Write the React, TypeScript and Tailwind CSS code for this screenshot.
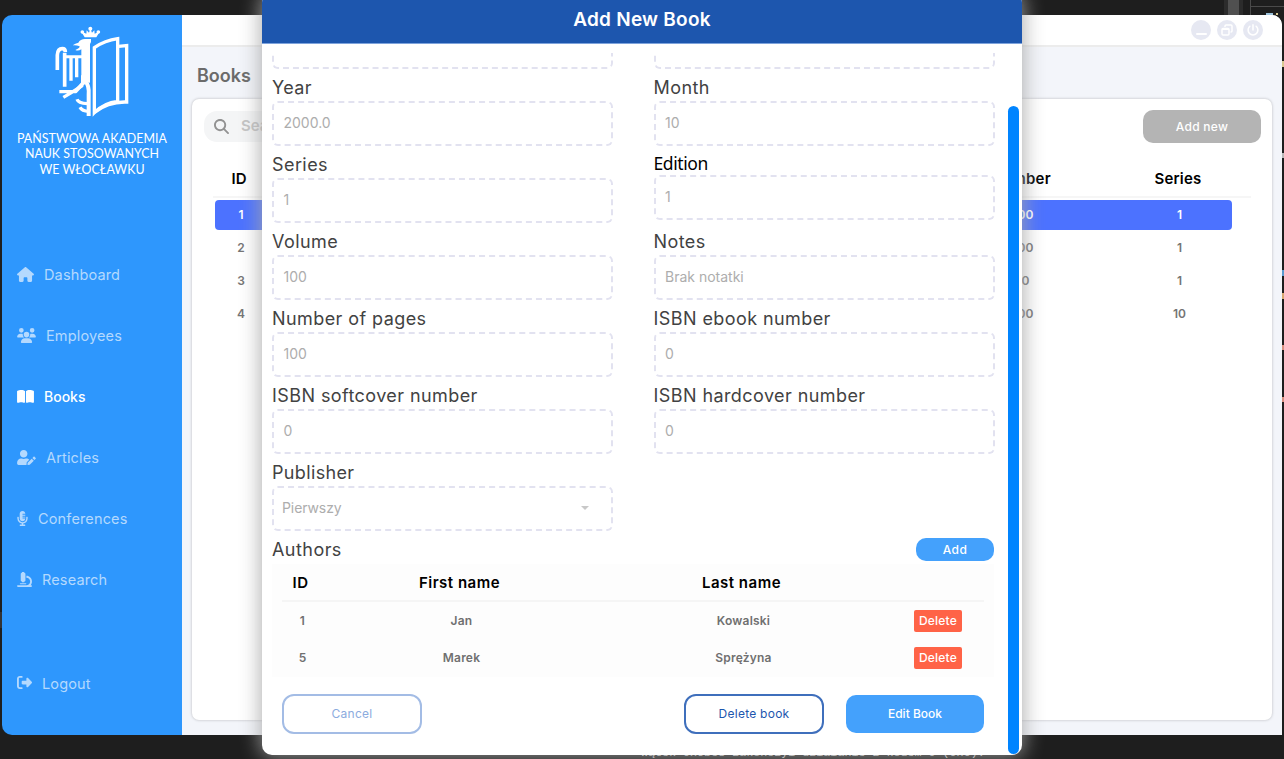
import React from "react";
import {
  FaHouse,
  FaUsers,
  FaBookOpen,
  FaMicroscope,
  FaRightFromBracket,
  FaMagnifyingGlass,
  FaPowerOff,
} from "react-icons/fa6";
import { FaUserEdit, FaMicrophoneAlt } from "react-icons/fa";

function Crest() {
  return (
    <svg viewBox="0 0 255 300" className="h-[100px] w-[85px]" fill="none" stroke="#fff">
      <path fill="#fff" stroke="none" d="M104 46 93 28l16 7 1-10 7 7 4-12 5 12 7-7 1 10 16-7-11 18Z" />
      <g fill="#fff" stroke="none">
        <circle cx="97" cy="30" r="5.5" />
        <circle cx="121" cy="20" r="6" />
        <circle cx="145" cy="30" r="5.5" />
        <path d="M68 70q8-6 17-8 6-11 20-11h18v9l-3 6v116l-26-3V82q-9 6-18 2l7-4q6-2 6-7-12-5-21-3Z" />
      </g>
      <path strokeWidth="11" d="M22 144V99q1-19 15-19 9 0 9 10" />
      <path strokeWidth="11" d="M44 92v102" />
      <path strokeWidth="9" d="M40 104h60" />
      <path strokeWidth="10" d="M63 102v74M80 102v64" />
      <path strokeWidth="12" d="M99 160v24l-24 26" />
      <path strokeWidth="10" d="M78 209H28M98 190l-34 22-24 14" />
      <path strokeWidth="12" d="M106 178q12 12 10 40v64" />
      <path strokeWidth="10" d="M81 232q4 12 31 13M90 256q6 12 26 12" />
      <path strokeWidth="10" d="M133 77q32-22 70-27v188q-40 4-70 34Z" />
      <path strokeWidth="10" d="M205 73l25-2v169q-55-2-97 31" />
    </svg>
  );
}

const nav = [
  { label: "Dashboard", Icon: FaHouse, size: "h-[15px] w-[17px]" },
  { label: "Employees", Icon: FaUsers, size: "h-[15px] w-[19px]" },
  { label: "Books", Icon: FaBookOpen, size: "h-[15px] w-[17px]" },
  { label: "Articles", Icon: FaUserEdit, size: "h-[15px] w-[19px]" },
  { label: "Conferences", Icon: FaMicrophoneAlt, size: "h-[15px] w-[11px]" },
  { label: "Research", Icon: FaMicroscope, size: "h-[15px] w-[15px]" },
];

function Sidebar() {
  return (
    <aside className="flex w-[180px] shrink-0 flex-col bg-[#2e97fd] text-[14.5px] tracking-[0.15px] text-[#b4d9fe]">
      <div className="flex flex-col items-center pt-[7px]">
        <Crest />
        <div className="mt-[9px] text-center font-[Lato] text-[12.4px] leading-[15.3px] tracking-[0.05px] whitespace-nowrap text-white">
          PAŃSTWOWA AKADEMIA
          <br />
          NAUK STOSOWANYCH
          <br />
          WE WŁOCŁAWKU
        </div>
      </div>
      <nav className="mt-[67px] flex flex-col pl-[15px]">
        {nav.map(({ label, Icon, size }) => (
          <a
            key={label}
            className={
              label === "Books"
                ? "flex h-[61px] items-center gap-[10px] text-[14px] font-medium tracking-[0px] text-white"
                : "flex h-[61px] items-center gap-[10px]"
            }
          >
            <Icon className={size} />
            {label}
          </a>
        ))}
      </nav>
      <a className="mt-[59px] flex h-[30px] items-center gap-[10px] pl-[15px]">
        <FaRightFromBracket className="mb-[3px] h-[15px] w-[15px]" />
        Logout
      </a>
    </aside>
  );
}

const rows = [
  ["1", "100", "1"],
  ["2", "100", "1"],
  ["3", "10", "1"],
  ["4", "100", "10"],
];

function BooksTable() {
  return (
    <div className="mr-[21px] ml-[21px] pt-[20px] text-center">
      <div className="grid h-[35px] grid-cols-[52px_1fr_168px_146px] items-center border-b-2 border-[#f6f6f6] text-[15px] font-semibold text-black">
        <span>ID</span>
        <span />
        <span className="tracking-[0.3px]">Number</span>
        <span className="tracking-[0.2px]">Series</span>
      </div>
      <div className="mt-[2px] flex w-[1019px] flex-col gap-[3px] pl-[2px] text-[12px] font-semibold text-[#757575]">
        {rows.map(([id, num, series]) => (
          <div
            key={id}
            className={
              id === "1"
                ? "grid h-[30px] grid-cols-[52px_1fr_168px_125px] items-center rounded-[4px] bg-[#4c72ff] text-white"
                : "grid h-[30px] grid-cols-[52px_1fr_168px_125px] items-center"
            }
          >
            <span>{id}</span>
            <span />
            <span>{num}</span>
            <span className="pl-[20px]">{series}</span>
          </div>
        ))}
      </div>
    </div>
  );
}

function Main() {
  const round = "flex h-[20px] w-[20px] items-center justify-center rounded-full bg-[#e6e8f2]";
  return (
    <main className="flex flex-1 flex-col bg-[#f3f5fa]">
      <div className="flex h-[32px] shrink-0 items-center justify-end gap-[6px] border-b-2 border-[#ececec] bg-white pr-[19px]">
        <div className={round}>
          <div className="mt-[8px] h-[2px] w-[11px] rounded bg-white" />
        </div>
        <div className={round}>
          <svg viewBox="0 0 12 12" className="h-[12px] w-[12px]" fill="none" stroke="#fff" strokeWidth="1.5">
            <rect x="1" y="4.5" width="7" height="6.5" rx="1" />
            <path strokeWidth="1.8" d="M1 5h7" />
            <path d="M4 3V2q0-1 1-1h5q1 0 1 1v5q0 1-1 1h-.5" />
          </svg>
        </div>
        <div className={round}>
          <FaPowerOff className="h-[12px] w-[12px] text-white" />
        </div>
      </div>
      <h1 className="mt-[15px] ml-[15px] h-[28px] text-[18px] leading-[28px] font-semibold text-[#6b6b6b]">Books</h1>
      <section className="mt-[9px] mr-[10px] ml-[10px] h-[621px] rounded-[7px] bg-white shadow-[0_0_3px_rgba(0,0,0,0.25)]">
        <div className="flex items-start justify-between pt-[11px] pr-[11px] pl-[12px]">
          <div className="mt-[1px] flex h-[31px] w-[300px] items-center gap-[12px] rounded-[13px] bg-[#f4f5f6] pl-[10px] text-[15px] font-semibold text-[#c4c4c4]">
            <FaMagnifyingGlass className="h-[15px] w-[15px] text-[#929292]" />
            <span className="w-[21px] overflow-hidden">Search</span>
          </div>
          <button className="h-[33px] w-[118px] rounded-[10px] bg-[#b4b4b4] text-[12px] font-medium tracking-[0.3px] text-white">
            Add new
          </button>
        </div>
        <BooksTable />
      </section>
    </main>
  );
}

const box =
  "flex h-[45px] items-center rounded-[6px] border-2 border-dashed border-[#e2e2f0] pb-[2px] pl-[9.5px] text-[14px] text-[#adadad]";

function Field({ label, value }: { label: string; value: string }) {
  return (
    <div className="h-[77px] w-[341px]">
      <div
        className={
          label === "Edition"
            ? "flex h-[29px] items-center pt-[6px] font-['Noto_Sans'] text-[17.5px] leading-[23px] tracking-[-0.4px] text-black"
            : "flex h-[32px] items-center pt-[5px] text-[18px] tracking-[0.42px] text-[#424242]"
        }
      >
        {label}
      </div>
      <div className={box}>{value}</div>
    </div>
  );
}

const left = [
  ["Year", "2000.0"],
  ["Series", "1"],
  ["Volume", "100"],
  ["Number of pages", "100"],
  ["ISBN softcover number", "0"],
];
const right = [
  ["Month", "10"],
  ["Edition", "1"],
  ["Notes", "Brak notatki"],
  ["ISBN ebook number", "0"],
  ["ISBN hardcover number", "0"],
];
const authors = [
  ["1", "Jan", "Kowalski"],
  ["5", "Marek", "Sprężyna"],
];

function ClippedBox() {
  return (
    <div className="flex h-[16px] w-[341px] flex-col justify-end overflow-hidden">
      <div className="h-[46px] shrink-0 rounded-[6px] border-2 border-dashed border-[#e2e2f0]" />
    </div>
  );
}

function Modal() {
  return (
    <div className="absolute top-[-7px] left-[262px] flex h-[762px] w-[760px] flex-col overflow-hidden rounded-[10px] bg-white shadow-[0_0_20px_2px_rgba(165,165,165,0.85)]">
      <header className="flex h-[51px] shrink-0 items-center justify-center border-b border-[#7ea3dc] bg-[#1d56ae] pt-[5px] text-[19px] font-semibold tracking-[0.25px] text-white">
        Add New Book
      </header>
      <div className="flex pt-[9px]">
        <div className="w-[732px] pl-[10px]">
          <div className="flex gap-[40.5px]">
            <div className="flex flex-col">
              <ClippedBox />
              {left.map(([l, v]) => (
                <Field key={l} label={l} value={v} />
              ))}
              <div className="h-[77px]">
                <div className="flex h-[32px] items-center pt-[5px] text-[18px] tracking-[0.35px] text-[#424242]">Publisher</div>
                <div className="flex h-[45px] items-center justify-between rounded-[6px] border-2 border-dashed border-[#e2e2f0] pr-[22px] pb-[2px] pl-[8px] text-[14px] tracking-[-0.1px] text-[#adadad]">
                  Pierwszy
                  <svg viewBox="0 0 8 4" className="h-[4px] w-[8px]">
                    <path d="M0 0h8L4 4Z" fill="#c8c8c8" />
                  </svg>
                </div>
              </div>
            </div>
            <div className="flex flex-col">
              <ClippedBox />
              {right.map(([l, v]) => (
                <Field key={l} label={l} value={v} />
              ))}
            </div>
          </div>
          <div className="flex h-[33px] w-[722px] items-center justify-between pt-[4px] text-[18px] tracking-[0.45px] text-[#424242]">
            Authors
            <button className="h-[23px] w-[78px] rounded-[10px] bg-[#44a1fc] text-[12px] font-medium text-white">Add</button>
          </div>
          <div className="h-[113px] w-[722px] bg-[#fdfdfd] px-[10px] text-center">
            <div className="grid h-[38px] grid-cols-[37px_281px_283px_101px] items-center border-b-2 border-[#f5f5f5] pt-[2px] text-[15px] font-semibold tracking-[0.5px] text-black">
              <span>ID</span>
              <span>First name</span>
              <span>Last name</span>
            </div>
            {authors.map(([id, first, last]) => (
              <div
                key={id}
                className="grid h-[37px] grid-cols-[37px_281px_283px_101px] items-center pl-[2px] text-[12px] font-semibold tracking-[0.2px] text-[#707070]"
              >
                <span>{id}</span>
                <span>{first}</span>
                <span>{last}</span>
                <span className="ml-[29px] h-[22px] w-[48px] rounded-[2px] bg-[#ff6347] text-[12px] leading-[22px] font-medium text-white">
                  Delete
                </span>
              </div>
            ))}
          </div>
          <div className="mt-[17px] flex items-center px-[10px] text-[12px] tracking-[0.25px]">
            <button className="h-[40px] w-[140px] rounded-[12px] border-2 border-[#a3bce5] text-[#8cabde]">Cancel</button>
            <button className="ml-[262px] h-[40px] w-[140px] rounded-[12px] border-2 border-[#3f6fbc] text-[#1d56ae]">
              Delete book
            </button>
            <button className="ml-[22px] h-[38px] w-[138px] rounded-[10px] bg-[#44a1fc] font-medium tracking-[0px] text-white">
              Edit Book
            </button>
          </div>
        </div>
        <div className="mt-[52.5px] ml-[14px] h-[648px] w-[10.5px] rounded-full bg-[#0084ff]" />
      </div>
    </div>
  );
}

export default function App() {
  return (
    <div className="relative flex h-[759px] w-[1284px] flex-col overflow-hidden bg-[#1e1e1e] font-[Inter,sans-serif]">
      <div className="flex h-[15px] shrink-0 justify-end">
        <div className="h-full w-[19px] border-x-4 border-[#2c2c2c] bg-[#505050]" />
        <div className="ml-[7px] h-full w-[34px] border-l border-[#4a4a4a]">
          <div className="h-[7px] border-b border-[#4a4a4a]" />
          <div className="mt-[6px] ml-[15px] flex gap-[3px]">
            <div className="h-[2px] w-[7px] bg-[#9cc3dc]" />
            <div className="h-[2px] w-[2px] bg-[#d8c890]" />
          </div>
        </div>
      </div>
      <div className="mx-[2px] flex h-[720px] shrink-0 overflow-hidden rounded-l-[10px] rounded-tr-[10px]">
        <Sidebar />
        <Main />
      </div>
      <div className="flex h-[24px] items-end pl-[641px] font-['Liberation_Mono'] text-[11.7px] leading-[13px] whitespace-pre text-[#dcdcdc]">
        <span className="mb-[-1px]">Wątek 0x6bc8 zakończył działanie z kodem 0 (0x0).</span>
      </div>
      <div className="absolute top-[61px] right-0 h-[6px] w-[2px] bg-[#d8c890]" />
      <div className="absolute top-[153px] right-0 h-[5px] w-[2px] bg-[#b8b8b8]" />
      <div className="absolute top-[270px] right-0 h-[6px] w-[2px] bg-[#5a9bd0]" />
      <div className="absolute top-[293px] right-0 h-[6px] w-[2px] bg-[#d8a870]" />
      <div className="absolute top-[345px] right-0 h-[5px] w-[2px] bg-[#d89080]" />
      <div className="absolute top-[397px] right-0 h-[5px] w-[2px] bg-[#d89080]" />
      <div className="absolute top-[612px] left-0 h-[16px] w-[2px] bg-[#333]" />
      <Modal />
    </div>
  );
}
